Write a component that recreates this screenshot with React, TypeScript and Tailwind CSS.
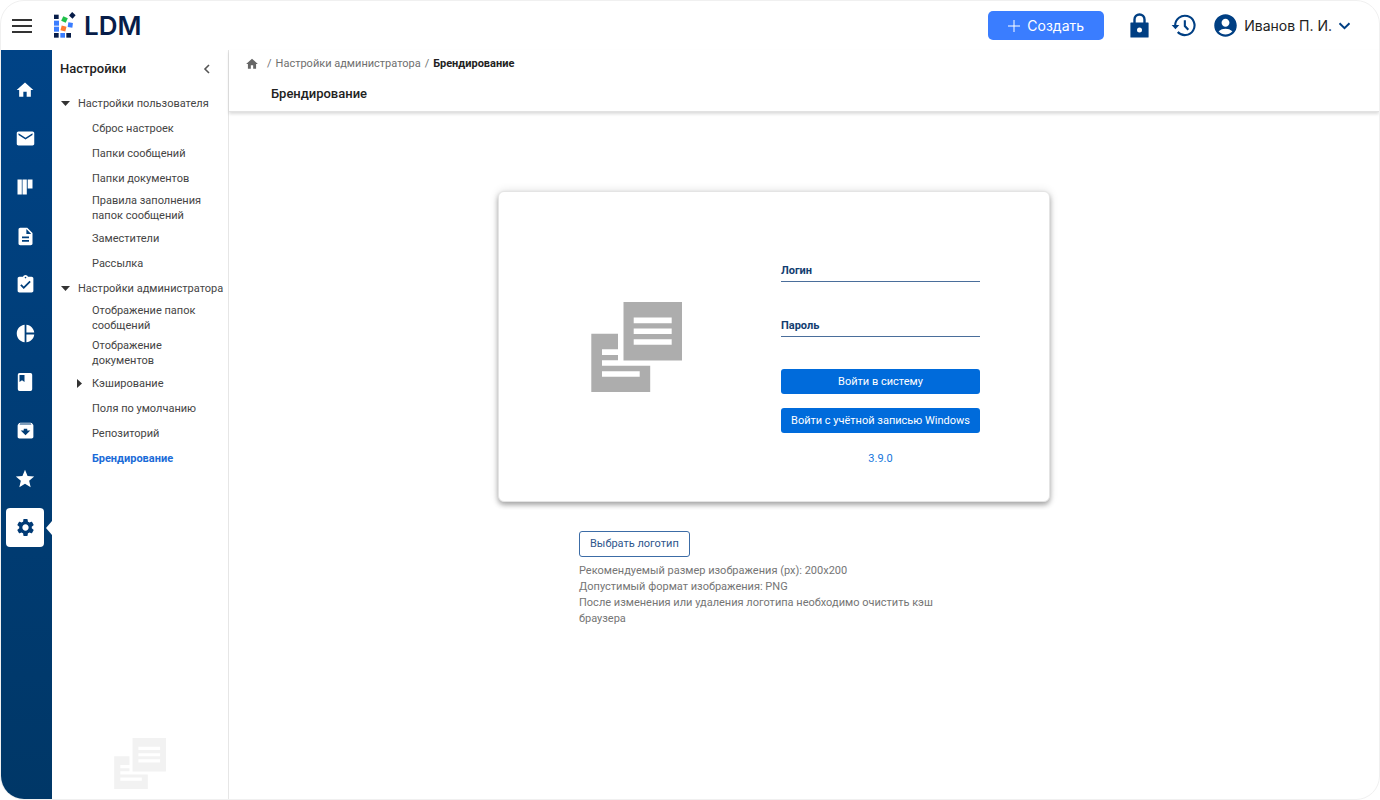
import type { ReactNode } from "react";
import {
  MdAccountCircle,
  MdArchive,
  MdAssignmentTurnedIn,
  MdDescription,
  MdEmail,
  MdHome,
  MdPieChart,
  MdSettings,
  MdStar,
} from "react-icons/md";

function BoardIcon() {
  return (
    <svg width="20" height="20" viewBox="0 0 20 20" fill="currentColor" aria-hidden="true">
      <path d="M2.500 2.500h4.300v15H2.500zM7.500 2.500h4.300v15H7.500zM12.700 2.500H17.500v9h-4.800z" />
    </svg>
  );
}

function BookIcon() {
  return (
    <svg width="20" height="20" viewBox="0 0 20 20" fill="currentColor" aria-hidden="true">
      <path
        fillRule="evenodd"
        d="M4.500 1h11A1.700 1.700 0 0 1 17.200 2.700v14.600A1.700 1.700 0 0 1 15.500 19h-11a1.700 1.700 0 0 1-1.700-1.700V2.700A1.700 1.700 0 0 1 4.500 1zM4.500 3v7L7 8.300 9.500 10V3z"
      />
    </svg>
  );
}

const railItems: { label: string; icon: ReactNode; active?: boolean }[] = [
  { label: "Главная", icon: <MdHome size={20} /> },
  { label: "Сообщения", icon: <MdEmail size={21} /> },
  { label: "Доска", icon: <BoardIcon /> },
  { label: "Документы", icon: <MdDescription size={21} /> },
  { label: "Задачи", icon: <MdAssignmentTurnedIn size={21} /> },
  { label: "Отчёты", icon: <MdPieChart size={21} /> },
  { label: "Справочники", icon: <BookIcon /> },
  { label: "Архив", icon: <MdArchive size={21} /> },
  { label: "Избранное", icon: <MdStar size={22} /> },
  { label: "Настройки", icon: <MdSettings size={21} />, active: true },
];

type TreeItem = {
  label: string;
  level: 0 | 1;
  arrow?: "down" | "right";
  active?: boolean;
};

const treeItems: TreeItem[] = [
  { label: "Настройки пользователя", level: 0, arrow: "down" },
  { label: "Сброс настроек", level: 1 },
  { label: "Папки сообщений", level: 1 },
  { label: "Папки документов", level: 1 },
  { label: "Правила заполнения папок сообщений", level: 1 },
  { label: "Заместители", level: 1 },
  { label: "Рассылка", level: 1 },
  { label: "Настройки администратора", level: 0, arrow: "down" },
  { label: "Отображение папок сообщений", level: 1 },
  { label: "Отображение документов", level: 1 },
  { label: "Кэширование", level: 1, arrow: "right" },
  { label: "Поля по умолчанию", level: 1 },
  { label: "Репозиторий", level: 1 },
  { label: "Брендирование", level: 1, active: true },
];

function Logo() {
  return (
    <a href="#" className="flex items-center gap-[7px] text-[#071d49]">
      <svg width="24" height="27" viewBox="160 36 72 81" aria-hidden="true">
        <g fill="#071d49">
          <rect x="163" y="44" width="14" height="13" />
          <rect x="163" y="99" width="14" height="14" />
          <rect x="200" y="99" width="14" height="14" />
          <rect x="211" y="39" width="14" height="14" transform="rotate(42 218 46)" />
        </g>
        <g fill="#3a7dff">
          <rect x="163" y="62" width="15" height="15" />
          <rect x="163" y="80" width="15" height="15" />
          <rect x="182" y="99" width="14" height="14" />
          <rect x="205" y="68" width="14" height="14" transform="rotate(8 212 75)" />
        </g>
        <rect x="187" y="51" width="15" height="15" fill="#1fc04a" transform="rotate(25 194.500 58.500)" />
        <rect x="184" y="78" width="15" height="15" fill="#ff7a30" transform="rotate(14 191.500 85.500)" />
      </svg>
      <span className="font-[Inter,sans-serif] text-[26px] leading-7 font-semibold">LDM</span>
    </a>
  );
}

function DocumentsMark({ className }: { className: string }) {
  return (
    <svg viewBox="0 0 91 90" fill="currentColor" className={className} aria-hidden="true">
      <path
        fillRule="evenodd"
        d="M32.500 0H91v58.500H32.500zM42.700 15.500v5.700h38v-5.700zM42.700 26.500v5.500h38v-5.500zM42.700 37.200v5.500h38v-5.500z"
      />
      <path
        fillRule="evenodd"
        d="M.3 31.800H27v15.500H11V53h16v5.300H11v5.500h48.200V90H.3zM11 69.200v5.500h37.700v-5.500z"
      />
    </svg>
  );
}

function Header() {
  return (
    <header className="flex h-[49px] shrink-0 items-center pr-7 pl-[10px]">
      <button type="button" aria-label="Меню" className="mr-5 py-2">
        <svg width="22" height="16" viewBox="0 0 22 16" stroke="#333" strokeWidth="2" aria-hidden="true">
          <path d="M1 2h20M1 8h20M1 14h20" />
        </svg>
      </button>
      <Logo />
      <div className="ml-auto flex items-center font-[Inter,sans-serif] text-[#003f83]">
        <button
          type="button"
          className="flex h-[29px] w-[116px] items-center justify-center gap-[7px] rounded-[5px] bg-[#3a7dff] text-sm text-white"
        >
          <svg width="12" height="12" viewBox="0 0 12 12" stroke="currentColor" aria-hidden="true">
            <path d="M6 0v12M0 6h12" />
          </svg>
          Создать
        </button>
        <button type="button" aria-label="Заблокировать" className="ml-[26px]">
          <svg width="19" height="25" viewBox="0 0 19 25" aria-hidden="true">
            <path d="M4.500 11V6.500a5 5 0 0 1 10 0V11" fill="none" stroke="currentColor" strokeWidth="2.400" />
            <path
              fill="currentColor"
              fillRule="evenodd"
              d="M1 9.500h17a.6.6 0 0 1 .6.6v13.800a.6.6 0 0 1-.6.6H1a.6.6 0 0 1-.6-.6V10.100a.6.6 0 0 1 .6-.6zM9.500 14.600a2.500 2.500 0 1 0 0 5 2.500 2.500 0 0 0 0-5z"
            />
          </svg>
        </button>
        <button type="button" aria-label="История" className="ml-[22px]">
          <svg width="25" height="23" viewBox="0 0 26 24" fill="none" stroke="currentColor" strokeWidth="2.200" aria-hidden="true">
            <path d="M4.300 12A10.100 10.100 0 1 1 7 18.800M7 18.800a10.100 10.100 0 0 0 2.500 2" />
            <path d="M14.400 6.500v6l3.600 4" />
            <path d="M.6 11.500h8L4.600 16z" fill="currentColor" stroke="none" />
          </svg>
        </button>
        <button type="button" className="ml-4 flex items-center">
          <MdAccountCircle size={27} />
          <span className="ml-[5px] text-sm text-[#222]">Иванов П. И.</span>
          <svg
            width="13"
            height="8"
            viewBox="0 0 13 8"
            fill="none"
            stroke="currentColor"
            strokeWidth="2"
            className="ml-[6px]"
            aria-hidden="true"
          >
            <path d="M1.500 1.200l5 5 5-5" />
          </svg>
        </button>
      </div>
    </header>
  );
}

function Rail() {
  return (
    <nav className="w-[51px] shrink-0 bg-linear-to-b from-[#004386] to-[#003767] pt-4">
      <ul className="grid h-[486px] auto-rows-fr">
        {railItems.map((item) => (
          <li key={item.label} className="relative flex items-center pl-[5px]">
            <a
              href="#"
              aria-label={item.label}
              className={
                item.active
                  ? "flex h-[39px] w-[38px] items-center justify-center rounded bg-white text-[#003a75]"
                  : "flex h-[39px] w-[38px] items-center justify-center text-white"
              }
            >
              {item.icon}
            </a>
            {item.active && (
              <svg width="6" height="14" viewBox="0 0 6 14" fill="#fff" className="absolute right-0" aria-hidden="true">
                <path d="M6 0v14L0 7z" />
              </svg>
            )}
          </li>
        ))}
      </ul>
    </nav>
  );
}

function SettingsTree() {
  return (
    <aside className="flex w-[177px] shrink-0 flex-col border-r border-[#e6e6e6]">
      <div className="flex items-center justify-between pt-[9px] pr-[17px] pl-2">
        <h2 className="text-[13px] leading-5 font-medium text-[#222]">Настройки</h2>
        <button type="button" aria-label="Свернуть">
          <svg width="8" height="10" viewBox="0 0 8 10" fill="none" stroke="#555" strokeWidth="1.600" aria-hidden="true">
            <path d="M6 1L2 5l4 4" />
          </svg>
        </button>
      </div>
      <ul className="mt-[13px] flex flex-col gap-[3px]">
        {treeItems.map((item) => (
          <li
            key={item.label}
            className={
              item.level === 0
                ? "flex min-h-[22px] items-center py-px pl-[9px]"
                : "flex min-h-[22px] items-center py-px pr-6 pl-[23px]"
            }
          >
            <span className="flex w-[17px] shrink-0">
              {item.arrow === "down" && (
                <svg width="9" height="5" viewBox="0 0 9 5" fill="#333" aria-hidden="true">
                  <path d="M0 0h9L4.500 5z" />
                </svg>
              )}
              {item.arrow === "right" && (
                <svg width="9" height="9" viewBox="0 0 9 9" fill="#333" className="ml-[2px]" aria-hidden="true">
                  <path d="M0 0l5 4.500L0 9z" />
                </svg>
              )}
            </span>
            <a
              href="#"
              className={
                item.active
                  ? "text-[11px] leading-[15px] font-bold text-[#1a6bd8]"
                  : "text-[11px] leading-[15px] text-[#444]"
              }
            >
              {item.label}
            </a>
          </li>
        ))}
      </ul>
      <DocumentsMark className="mx-auto mt-auto mb-[10px] w-[52px] text-[#f2f2f2]" />
    </aside>
  );
}

function LoginField({ id, label, type }: { id: string; label: string; type: string }) {
  return (
    <div className="flex h-5 items-center border-b border-[#4a6e9b] pb-[2px]">
      <label htmlFor={id} className="text-[11px] leading-4 font-bold text-[#123e70]">
        {label}
      </label>
      <input id={id} type={type} className="min-w-0 flex-1 pl-2 text-[11px] outline-none" />
    </div>
  );
}

function LoginPreview() {
  return (
    <section className="grid h-[311px] w-full max-w-[552px] grid-cols-2 items-center rounded-md border border-[#e4e4e4] bg-white shadow-[0_3px_5px_rgba(0,0,0,0.3),0_0_10px_rgba(0,0,0,0.12)]">
      <DocumentsMark className="mx-auto w-[91px] text-[#adadad]" />
      <form className="mr-[69px] ml-[7px] flex flex-col pt-9">
        <LoginField id="login" label="Логин" type="text" />
        <div className="mt-[35px]">
          <LoginField id="password" label="Пароль" type="password" />
        </div>
        <button type="button" className="mt-8 h-[25px] rounded-[3px] bg-[#006bdb] pt-px text-[11px] text-white">
          Войти в систему
        </button>
        <button type="button" className="mt-[14px] h-[25px] rounded-[3px] bg-[#006bdb] pt-px text-[11px] text-white">
          Войти с учётной записью Windows
        </button>
        <p className="mt-[18px] text-center text-[11px] leading-4 text-[#1676dc]">3.9.0</p>
      </form>
    </section>
  );
}

function PageHead() {
  return (
    <div className="h-[62px] border-b border-[#e2e2e2] pt-[6px] shadow-[0_2px_3px_rgba(0,0,0,0.14)]">
      <nav className="flex items-center gap-1 pl-4 text-[11px] leading-4 text-[#6f6f6f]">
        <a href="#" aria-label="Главная" className="mr-1 text-[#666]">
          <MdHome size={14} />
        </a>
        <span>/</span>
        <a href="#">Настройки администратора</a>
        <span>/</span>
        <span className="font-bold text-[#222]">Брендирование</span>
      </nav>
      <h1 className="mt-3 pl-[42px] text-[13px] leading-5 font-medium text-[#222]">Брендирование</h1>
    </div>
  );
}

export default function App() {
  return (
    <div className="flex min-h-screen flex-col overflow-hidden rounded-3xl border border-[#f0f0f0] bg-white font-[Roboto,sans-serif]">
      <Header />
      <div className="flex flex-1">
        <Rail />
        <SettingsTree />
        <main className="min-w-0 flex-1">
          <PageHead />
          <div className="flex justify-center pt-[79px] pr-[60px]">
            <div className="w-full max-w-[552px]">
              <LoginPreview />
              <div className="mt-7 max-w-[440px] pl-[81px]">
                <button
                  type="button"
                  className="h-[26px] rounded-[3px] border border-[#3c6ca6] px-[10px] text-[11px] text-[#2f568c]"
                >
                  Выбрать логотип
                </button>
                <div className="mt-[6px] text-[11px] leading-4 text-[#757575]">
                  <p>Рекомендуемый размер изображения (px): 200x200</p>
                  <p>Допустимый формат изображения: PNG</p>
                  <p>После изменения или удаления логотипа необходимо очистить кэш браузера</p>
                </div>
              </div>
            </div>
          </div>
        </main>
      </div>
    </div>
  );
}
